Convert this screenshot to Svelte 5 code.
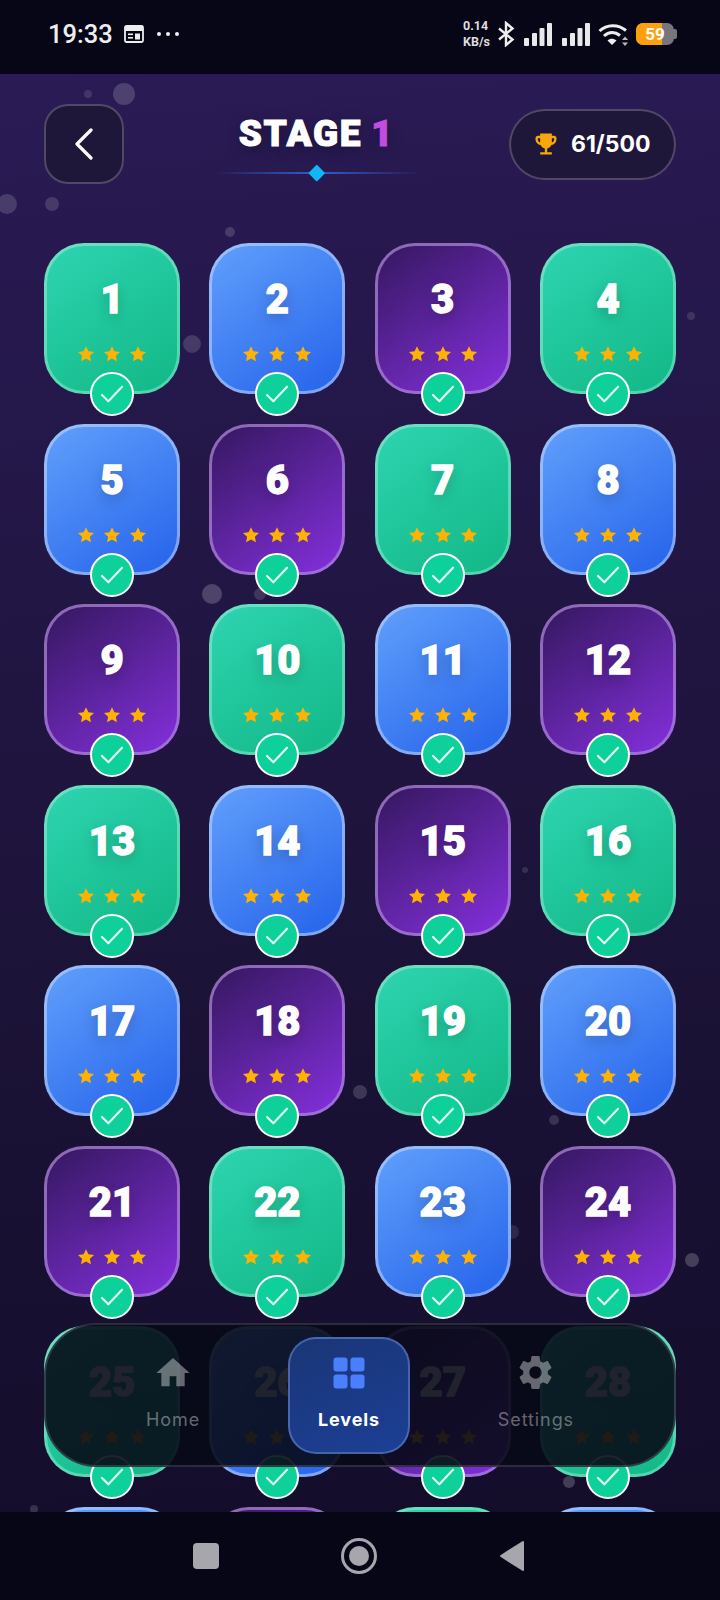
<script>
  const kinds = ['green', 'blue', 'purple'];
  // the last row only peeks out above the system bar, so it has no content
  const levels = Array.from({ length: 32 }, (_, i) => ({ n: i + 1, kind: kinds[i % 3] }));

  // x, y are page coordinates minus the status bar
  const bubbles = [
    [124, 20, 11, 0.17], [88, 20, 4, 0.12], [7, 130, 10, 0.15], [52, 130, 7, 0.14],
    [230, 158, 5, 0.15], [192, 270, 9, 0.15], [691, 242, 4, 0.12], [212, 520, 10, 0.2],
    [260, 520, 6, 0.14], [299, 408, 4, 0.1], [525, 796, 3, 0.12], [360, 1018, 7, 0.16],
    [554, 1046, 5, 0.14], [512, 1158, 7, 0.1], [692, 1186, 7, 0.2], [569, 1408, 6, 0.2],
    [34, 1435, 4, 0.15], [176, 630, 3, 0.1]
  ];

  const items = [
    { label: 'Home', icon: 'home' },
    { label: 'Levels', icon: 'grid', active: true },
    { label: 'Settings', icon: 'gear' }
  ];
</script>

<div class="phone">
  <div class="status">
    <div class="status-left">
      <span class="time">19:33</span>
      <svg class="cal" width="20" height="18" viewBox="0 0 20 18">
        <rect x="1" y="1" width="18" height="16" rx="1.5" fill="none" stroke="#eee" stroke-width="1.8" />
        <rect x="1" y="1" width="18" height="5" fill="#eee" />
        <rect x="4" y="8.5" width="5" height="1.6" fill="#eee" />
        <rect x="11" y="8.5" width="5" height="6" fill="#eee" />
        <rect x="4" y="12" width="5" height="1.6" fill="#eee" />
      </svg>
      <span class="dots"><i></i><i></i><i></i></span>
    </div>
    <div class="status-right">
      <div class="speed"><span>0.14</span><span>KB/s</span></div>
      <svg class="bt" width="18" height="26" viewBox="0 0 18 26" fill="none" stroke="#eee" stroke-width="2.4">
        <path d="M2 7.5 15.5 18.5 9 24V2l6.5 5.5L2 18.500" />
      </svg>
      <svg class="sig" width="28" height="23" viewBox="0 0 28 23" fill="#e8e8ea">
        <rect x="0" y="15" width="5" height="8" rx="1" /><rect x="8" y="10" width="5" height="13" rx="1" />
        <rect x="15.500" y="5" width="5" height="18" rx="1" /><rect x="23" y="0" width="5" height="23" rx="1" />
      </svg>
      <svg class="sig" width="28" height="23" viewBox="0 0 28 23" fill="#e8e8ea">
        <rect x="0" y="15" width="5" height="8" rx="1" /><rect x="8" y="10" width="5" height="13" rx="1" />
        <rect x="15.500" y="5" width="5" height="18" rx="1" /><rect x="23" y="0" width="5" height="23" rx="1" />
      </svg>
      <svg class="wifi" width="31" height="23" viewBox="0 0 31 23" fill="none" stroke="#eee" stroke-width="3">
        <path d="M1.500 8C9 1 20 1 28 7.500" />
        <path d="M6 13c5-4.500 11-4.500 16-.500" />
        <path d="M14 22 9.500 17.500c2.500-2.200 6-2.200 9 0Z" fill="#eee" stroke="none" />
        <path d="M27 13.500l3 3.500h-6ZM27 23l3-3.500h-6Z" fill="#bbb" stroke="none" />
      </svg>
      <div class="battery"><span class="fill"></span><span class="pct">59</span><span class="nub"></span></div>
    </div>
  </div>

  <main>
    {#each bubbles as b}
      <span class="bubble" style="left:{b[0] - b[2]}px;top:{b[1] - b[2]}px;width:{b[2] * 2}px;height:{b[2] * 2}px;opacity:{b[3]}"></span>
    {/each}

    <header>
      <button class="back" aria-label="Back">
        <svg width="22" height="32" viewBox="0 0 22 32" fill="none" stroke="#fff" stroke-width="3.200" stroke-linecap="round" stroke-linejoin="round">
          <path d="M18 2 4 16l14 14" />
        </svg>
      </button>
      <div class="title-block">
        <h1>STAGE <span>1</span></h1>
        <div class="divider"><i></i></div>
      </div>
      <div class="score">
        <svg width="28" height="28" viewBox="0 0 24 24" fill="#f7a70c">
          <path d="M19 5h-2V3H7v2H5c-1.100 0-2 .9-2 2v1c0 2.550 1.920 4.630 4.390 4.940.63 1.500 1.980 2.630 3.610 2.960V19H7v2h10v-2h-4v-3.100c1.630-.33 2.980-1.460 3.610-2.960C19.080 12.630 21 10.550 21 8V7c0-1.100-.9-2-2-2zM5 8V7h2v3.820C5.840 10.400 5 9.300 5 8zm14 0c0 1.300-.84 2.400-2 2.820V7h2v1z" />
        </svg>
        <span>61/500</span>
      </div>
    </header>

    <div class="grid">
      {#each levels as l}
        <div class="card {l.kind}">
          {#if l.n <= 28}
            <div class="num">{l.n}</div>
            <div class="stars">
              {#each [0, 1, 2] as _}
                <svg width="18" height="18" viewBox="0 0 24 24" fill="#ffb300">
                  <path d="M12 1.500l3.200 6.900 7.500.9-5.500 5.100 1.400 7.400L12 18.100l-6.600 3.700 1.400-7.400L1.300 9.300l7.500-.9z" />
                </svg>
              {/each}
            </div>
            <div class="check">
              <svg width="24" height="20" viewBox="0 0 26 22" fill="none" stroke="#e0f8f0" stroke-width="2.400" stroke-linecap="round" stroke-linejoin="round">
                <path d="M2 12l7 7L24 3" />
              </svg>
            </div>
          {/if}
        </div>
      {/each}
    </div>

    <nav>
      {#each items as it}
        <div class="item" class:active={it.active}>
          <div class="icon">
            {#if it.icon === 'home'}
              <svg width="40" height="40" viewBox="0 0 24 24" fill="currentColor"><path d="M10 20v-6h4v6h5v-8h3L12 3 2 12h3v8z" /></svg>
            {:else if it.icon === 'grid'}
              <svg width="32" height="32" viewBox="0 0 32 32" fill="#4a80ff">
                <rect x="0.500" y="0.500" width="14" height="14" rx="3" /><rect x="17.500" y="0.500" width="14" height="14" rx="3" />
                <rect x="0.500" y="17.500" width="14" height="14" rx="3" /><rect x="17.500" y="17.500" width="14" height="14" rx="3" />
              </svg>
            {:else}
              <svg width="41" height="41" viewBox="0 0 24 24" fill="currentColor"><path d="M19.140 12.940c.04-.3.06-.61.06-.94 0-.32-.02-.64-.07-.94l2.030-1.580c.18-.14.23-.41.12-.61l-1.920-3.320c-.12-.22-.37-.29-.59-.22l-2.390.96c-.5-.38-1.030-.7-1.620-.94l-.36-2.540c-.04-.24-.24-.41-.48-.41h-3.840c-.24 0-.43.17-.47.41l-.36 2.540c-.59.24-1.130.57-1.620.94l-2.390-.96c-.22-.08-.47 0-.59.22L2.740 8.870c-.12.21-.08.47.12.61l2.030 1.580c-.05.3-.09.63-.09.94s.02.64.07.94l-2.030 1.580c-.18.14-.23.41-.12.61l1.920 3.320c.12.22.37.29.59.22l2.390-.96c.5.38 1.030.7 1.620.94l.36 2.540c.05.24.24.41.48.41h3.840c.24 0 .44-.17.47-.41l.36-2.540c.59-.24 1.130-.56 1.620-.94l2.390.96c.22.08.47 0 .59-.22l1.920-3.320c.12-.22.07-.47-.12-.61l-2.010-1.580zM12 15.600c-1.980 0-3.600-1.620-3.600-3.600s1.620-3.600 3.600-3.600 3.600 1.620 3.600 3.600-1.620 3.600-3.600 3.600z" /></svg>
            {/if}
          </div>
          <span class="label">{it.label}</span>
        </div>
      {/each}
    </nav>
  </main>

  <div class="sysnav">
    <span class="square"></span>
    <span class="ring"><i></i></span>
    <svg width="26" height="32" viewBox="0 0 26 32"><path d="M2 16 24 2v28z" fill="#a7a6ad" stroke="#a7a6ad" stroke-width="2" stroke-linejoin="round" /></svg>
  </div>
</div>

<style>
  :global(body) { background: #070616; }
  .phone { width: 720px; height: 1600px; display: flex; flex-direction: column; overflow: hidden; font-family: Inter, "Liberation Sans", sans-serif; }

  .status { height: 74px; flex-shrink: 0; background: #070616; color: #eee; display: flex; align-items: center; justify-content: space-between; padding: 0 46px 6px 48px; box-sizing: border-box; }
  .status-left { display: flex; align-items: center; }
  .time { font: 500 25.500px Roboto, sans-serif; width: 76px; }
  .cal { margin-right: 13px; }
  .dots { display: flex; gap: 5px; }
  .dots i { width: 4px; height: 4px; border-radius: 50%; background: #eee; }
  .status-right { display: flex; align-items: center; }
  .speed { display: flex; flex-direction: column; font: 700 12.500px/16px Roboto, sans-serif; width: 34px; color: #ddd; }
  .bt { margin-left: 0; }
  .sig { margin-left: 9px; }
  .sig + .sig { margin-left: 10px; }
  .wifi { margin-left: 8px; }
  .battery { position: relative; margin-left: 7px; width: 38px; height: 22px; border-radius: 7px; background: #77767c; }
  .battery .fill { position: absolute; left: 0; top: 0; bottom: 0; width: 26px; background: #ff9f0a; border-radius: 7px 0 0 7px; }
  .battery .pct { position: absolute; inset: 0; text-align: center; font: 700 17px/22px Roboto, sans-serif; color: #fff; }
  .battery .nub { position: absolute; right: -3px; top: 6px; width: 3px; height: 10px; border-radius: 0 2px 2px 0; background: #77767c; }

  main { flex: 1; min-height: 0; position: relative; overflow: hidden; padding: 30px 44px 0 44px; background: linear-gradient(175deg, #2a1b55 0%, #241749 25%, #1c1338 60%, #130d2a 100%); }
  .bubble { position: absolute; border-radius: 50%; background: #fff; }

  header { position: relative; display: flex; align-items: center; justify-content: space-between; height: 80px; margin-bottom: 59px; }
  .back { width: 80px; height: 80px; box-sizing: border-box; padding: 0; border-radius: 24px; border: 2px solid rgba(255, 255, 255, 0.22); background: #1e1739; display: flex; align-items: center; justify-content: center; }
  .title-block { width: 206px; padding-top: 7px; display: flex; flex-direction: column; align-items: center; }
  h1 { margin: 0 0 11px; font-family: Roboto, sans-serif; font-size: 37px; line-height: 40px; font-weight: 900; color: #fff; letter-spacing: 1.700px; word-spacing: -2px; -webkit-text-stroke: 1px currentColor; white-space: nowrap; text-shadow: 0 4px 14px rgba(0, 0, 0, 0.35); }
  h1 span { color: #c04de0; }
  .divider { position: relative; width: 206px; height: 16px; display: flex; align-items: center; justify-content: center; background: linear-gradient(90deg, transparent, #2f5fd0 50%, transparent) center / 100% 2px no-repeat; }
  .divider i { width: 11.500px; height: 11.500px; background: #12b5f5; transform: rotate(45deg); border-radius: 1px; }
  .score { width: 167px; height: 71px; box-sizing: border-box; display: flex; align-items: center; gap: 11px; padding-left: 21px; border-radius: 36px; border: 2px solid rgba(255, 255, 255, 0.22); background: #1e1739; color: #fff; font-size: 23px; font-weight: 700; }

  .grid { position: relative; display: grid; grid-template-columns: repeat(4, 136px); justify-content: space-between; row-gap: 29.500px; }
  .card { position: relative; height: 151px; box-sizing: border-box; border-radius: 40px; border: 3px solid; display: flex; flex-direction: column; align-items: center; padding-top: 30px; }
  .green { background: linear-gradient(145deg, #2dd4b0, #12b886) padding-box, linear-gradient(145deg, #6fe0c4, #4fd3ab) border-box; border-color: transparent; }
  .blue { background: linear-gradient(145deg, #609ffb, #2563eb) padding-box, linear-gradient(145deg, #9ac0fb, #7aa2f5) border-box; border-color: transparent; }
  .purple { background: linear-gradient(145deg, #351860, #842fdc) padding-box, linear-gradient(145deg, #8a6ab0, #a26ce0) border-box; border-color: transparent; }
  .num { height: 48px; font-family: Roboto, sans-serif; font-size: 40px; line-height: 48px; font-weight: 900; color: #fff; -webkit-text-stroke: 1.300px #fff; text-shadow: 0 5px 14px rgba(0, 0, 0, 0.22); }
  .stars { display: flex; gap: 8px; margin-top: 21px; }
  .stars svg { display: block; }
  .check { position: absolute; left: 50%; bottom: -25px; transform: translateX(-50%); width: 44px; height: 44px; box-sizing: border-box; border-radius: 50%; border: 2px solid #fff; background: #0ed09a; display: flex; align-items: center; justify-content: center; }

  nav { position: absolute; left: 44px; bottom: 45px; width: 632px; height: 144px; box-sizing: border-box; padding: 0 70px; display: flex; align-items: center; justify-content: space-between; border: 2px solid rgba(255, 255, 255, 0.14); border-radius: 52px; background: rgba(8, 10, 23, 0.9); }
  .item { height: 117px; box-sizing: border-box; padding: 0 28px; border-radius: 28px; border: 2px solid transparent; display: flex; flex-direction: column; align-items: center; color: rgba(255, 255, 255, 0.38); }
  .item.active { background: linear-gradient(160deg, #1a3676, #1c3f96); border-color: rgba(150, 180, 240, 0.36); color: #fff; }
  .icon { height: 40px; margin-top: 14px; display: flex; align-items: center; justify-content: center; }
  .label { margin-top: 15px; font-size: 18px; line-height: 24px; letter-spacing: 0.9px; }
  .active .label { font-weight: 700; }

  .sysnav { height: 88px; flex-shrink: 0; background: #070616; display: flex; align-items: center; justify-content: center; gap: 122px; padding-right: 2px; box-sizing: border-box; }
  .square { width: 26px; height: 26px; border-radius: 4px; background: #a7a6ad; }
  .ring { width: 36px; height: 36px; box-sizing: border-box; border: 3px solid #a7a6ad; border-radius: 50%; display: flex; align-items: center; justify-content: center; }
  .ring i { width: 20px; height: 20px; border-radius: 50%; background: #a7a6ad; }
</style>
